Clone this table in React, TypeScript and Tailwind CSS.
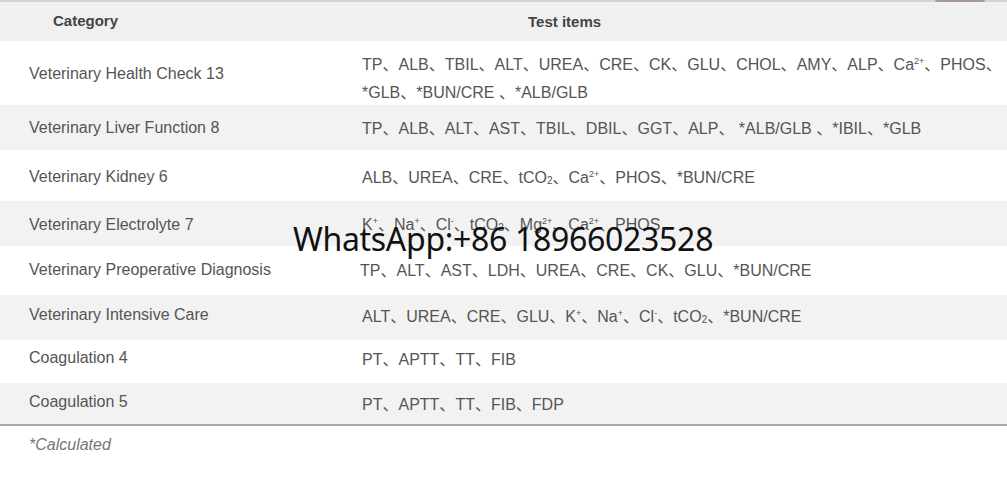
import React from "react";

const SEP = "、";

type Item = React.ReactNode;

const sup = (base: string, s: string) => (
  <span>
    {base}
    <sup className="text-[9px] -top-[6px]">{s}</sup>
  </span>
);
const sub = (base: string, s: string) => (
  <span>
    {base}
    <sub className="text-[10px] -bottom-[1px]">{s}</sub>
  </span>
);

function join(items: Item[], trailing = false) {
  return items.map((it, i) => (
    <React.Fragment key={i}>
      {it}
      {(i < items.length - 1 || trailing) && <span className="font-['Noto_Sans_CJK_SC']">{SEP}</span>}
    </React.Fragment>
  ));
}

type Row = {
  cat: string;
  items: React.ReactNode;
  h: string;
  gray: boolean;
  adj?: string;
  itemPl?: string;
};

const rows: Row[] = [
  {
    cat: "Veterinary Health Check 13",
    items: (
      <div className="leading-[27px] pt-[8px]">
        <div>
          {join(
            ["TP", "ALB", "TBIL", "ALT", "UREA", "CRE", "CK", "GLU", "CHOL", "AMY", "ALP", sup("Ca", "2+"), "PHOS"],
            true
          )}
        </div>
        <div>{join(["*GLB", "*BUN/CRE ", "*ALB/GLB"])}</div>
      </div>
    ),
    h: "h-[64px]",
    gray: false,
    adj: "pt-[1px]",
  },
  {
    cat: "Veterinary Liver Function 8",
    items: <div>{join(["TP", "ALB", "ALT", "AST", "TBIL", "DBIL", "GGT", "ALP", " *ALB/GLB ", "*IBIL", "*GLB"])}</div>,
    h: "h-[45px]",
    gray: true,
    adj: "pt-[1px]",
  },
  {
    cat: "Veterinary Kidney 6",
    items: <div>{join(["ALB", "UREA", "CRE", sub("tCO", "2"), sup("Ca", "2+"), "PHOS", "*BUN/CRE"])}</div>,
    h: "h-[51px]",
    gray: false,
    adj: "pt-[2px]",
  },
  {
    cat: "Veterinary Electrolyte 7",
    items: (
      <div className="pb-[2px]">
        {join([sup("K", "+"), sup("Na", "+"), sup("Cl", "-"), sub("tCO", "2"), sup("Mg", "2+"), sup("Ca", "2+"), "PHOS"])}
      </div>
    ),
    h: "h-[45px]",
    gray: true,
    adj: "pt-[2px]",
  },
  {
    cat: "Veterinary Preoperative Diagnosis",
    items: <div>{join(["TP", "ALT", "AST", "LDH", "UREA", "CRE", "CK", "GLU", "*BUN/CRE"])}</div>,
    h: "h-[49px]",
    gray: false,
    adj: "pb-[1px]",
    itemPl: "pl-[20px]",
  },
  {
    cat: "Veterinary Intensive Care",
    items: (
      <div className="pt-[3px]">
        {join(["ALT", "UREA", "CRE", "GLU", sup("K", "+"), sup("Na", "+"), sup("Cl", "-"), sub("tCO", "2"), "*BUN/CRE"])}
      </div>
    ),
    h: "h-[45px]",
    gray: true,
    adj: "pb-[6px]",
  },
  {
    cat: "Coagulation 4",
    items: <div className="pt-[3px]">{join(["PT", "APTT", "TT", "FIB"])}</div>,
    h: "h-[43px]",
    gray: false,
    adj: "pb-[8px]",
  },
  {
    cat: "Coagulation 5",
    items: <div className="pt-[3px]">{join(["PT", "APTT", "TT", "FIB", "FDP"])}</div>,
    h: "h-[41px]",
    gray: true,
    adj: "pb-[3px]",
  },
];

export default function App() {
  return (
    <div className="relative w-[1007px] h-[478px] bg-white overflow-hidden font-['Liberation_Sans','Noto_Sans_CJK_SC',sans-serif] text-[16px] text-[#555]">
      <div className="h-[2px] bg-[#d4d4d4]" />
      <div className="flex h-[39px] items-center bg-[#f0f0f0] font-bold text-[#444] text-[15px]">
        <div className="w-[340px] pl-[53px]">Category</div>
        <div className="pl-[188px] pt-[1px]">Test items</div>
      </div>
      {rows.map((r, i) => (
        <div
          key={i}
          className={`flex items-center ${r.h} ${r.gray ? "bg-[#f2f2f2]" : "bg-white"} ${r.adj ?? ""}`}
        >
          <div className="w-[340px] pl-[29px] shrink-0">{r.cat}</div>
          <div className={`${r.itemPl ?? "pl-[22px]"} whitespace-nowrap`}>{r.items}</div>
        </div>
      ))}
      <div className="h-[2px] bg-[#a8a8a8]" />
      <div className="pl-[29px] pt-[7px] italic text-[#777] text-[16px]">*Calculated</div>

      <div className="absolute left-[293px] top-[218px] font-['Noto_Sans',sans-serif] text-[32px] leading-[42px] text-[#111] tracking-[-0.3px]">
        WhatsApp:+86 18966023528
      </div>
      <div className="absolute left-[935px] -top-[3px] w-[50px] h-[5px] rounded-full bg-[#8a6f63] opacity-60" />
    </div>
  );
}
